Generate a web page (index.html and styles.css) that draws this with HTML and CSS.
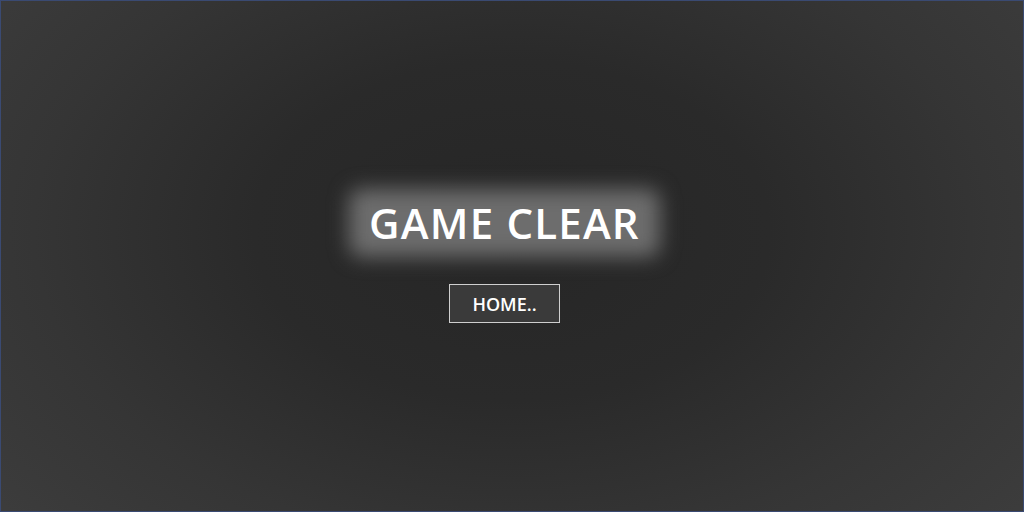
FILE: index.html
```html
<!DOCTYPE html>
<html>
<head>
<meta charset="utf-8">
<link rel="stylesheet" href="styles.css">
</head>
<body>
<main class="screen">
  <div class="panel">
    <h1 class="title">GAME CLEAR</h1>
    <button class="home-btn">HOME..</button>
  </div>
</main>
</body>
</html>
```
FILE: styles.css
```css
html, body {
  margin: 0;
  padding: 0;
  width: 1024px;
  height: 512px;
  overflow: hidden;
}
.screen {
  box-sizing: border-box;
  width: 1024px;
  height: 512px;
  border: 1px solid #3a4a72;
  padding-right: 15px;
  background: radial-gradient(ellipse 72% 95% at 50% 45%, #262626 0%, #2a2a2a 35%, #353535 65%, #3f3f3f 100%);
  display: flex;
  align-items: center;
  justify-content: center;
  font-family: "Open Sans", "DejaVu Sans", sans-serif;
}
.panel {
  display: flex;
  flex-direction: column;
  align-items: center;
  margin-top: 0;
}
.title {
  position: relative;
  z-index: 0;
  margin: 0;
  padding: 10px 18px;
  font-size: 42px;
  font-weight: 600;
  letter-spacing: 1.2px;
  line-height: 48px;
  color: #ffffff;
}
.title::before {
  content: "";
  position: absolute;
  z-index: -1;
  left: -2px;
  right: -2px;
  top: 0;
  bottom: 0;
  background: #6d6d6d;
  border-radius: 12px;
  filter: blur(10px);
}
.home-btn {
  margin-top: 27px;
  width: 111px;
  height: 39px;
  box-sizing: border-box;
  border: 1px solid #cfcfcf;
  background: #3a3a3a;
  color: #ffffff;
  font-family: "Open Sans", "DejaVu Sans", sans-serif;
  font-size: 18px;
  font-weight: 600;
  padding: 0;
}
```
